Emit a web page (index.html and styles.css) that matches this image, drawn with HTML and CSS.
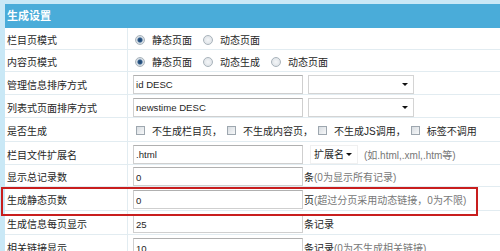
FILE: index.html
```html
<!DOCTYPE html>
<html lang="zh-CN">
<head>
    <meta charset="UTF-8">
    <title>生成设置</title>
    <link rel="stylesheet" href="styles.css">
</head>
<body>
<div class="page">
    <div class="panel">
        <div class="panel-head">生成设置</div>

        <div class="row compact">
            <div class="label">栏目页模式</div>
            <div class="field">
                <label class="opt"><input type="radio" name="listmode" checked>静态页面</label>
                <label class="opt"><input type="radio" name="listmode">动态页面</label>
            </div>
        </div>

        <div class="row compact">
            <div class="label">内容页模式</div>
            <div class="field">
                <label class="opt"><input type="radio" name="showmode" checked>静态页面</label>
                <label class="opt"><input type="radio" name="showmode">动态生成</label>
                <label class="opt"><input type="radio" name="showmode">动态页面</label>
            </div>
        </div>

        <div class="row">
            <div class="label">管理信息排序方式</div>
            <div class="field">
                <input type="text" class="txt" value="id DESC">
                <span class="select"><select></select></span>
            </div>
        </div>

        <div class="row">
            <div class="label">列表式页面排序方式</div>
            <div class="field">
                <input type="text" class="txt" value="newstime DESC">
                <span class="select"><select></select></span>
            </div>
        </div>

        <div class="row tall">
            <div class="label">是否生成</div>
            <div class="field checks">
                <label class="opt"><input type="checkbox">不生成栏目页，</label>
                <label class="opt"><input type="checkbox">不生成内容页，</label>
                <label class="opt"><input type="checkbox">不生成JS调用，</label>
                <label class="opt"><input type="checkbox">标签不调用</label>
            </div>
        </div>

        <div class="row">
            <div class="label">栏目文件扩展名</div>
            <div class="field">
                <input type="text" class="txt" value=".html">
                <span class="select small"><select><option>扩展名</option></select></span>
                <span class="note">(如.html,.xml,.htm等)</span>
            </div>
        </div>

        <div class="row compact">
            <div class="label">显示总记录数</div>
            <div class="field">
                <input type="text" class="txt" value="0">
                <span class="unit">条<span class="note">(0为显示所有记录)</span></span>
            </div>
        </div>

        <div class="row tall marked">
            <div class="label">生成静态页数</div>
            <div class="field">
                <input type="text" class="txt" value="0">
                <span class="unit">页<span class="note">(超过分页采用动态链接，0为不限)</span></span>
            </div>
        </div>

        <div class="row tall">
            <div class="label">生成信息每页显示</div>
            <div class="field">
                <input type="text" class="txt" value="25">
                <span class="unit">条记录</span>
            </div>
        </div>

        <div class="row tall">
            <div class="label">相关链接显示</div>
            <div class="field">
                <input type="text" class="txt" value="10">
                <span class="unit">条记录<span class="note">(0为不生成相关链接)</span></span>
            </div>
        </div>
    </div>
</div>
</body>
</html>
```

FILE: styles.css
```css
body {
    margin: 0;
    font-family: "Liberation Sans", "Noto Sans CJK SC", sans-serif;
    font-size: 10px;
    color: #262626;
    background: #fff;
}

.page {
    height: 251px;
    box-sizing: border-box;
    overflow: hidden;
    padding: 4px 0 0 5px;
    background: #c9e8f6;
}

.panel {
    background: #fff;
}

.panel-head {
    height: 24px;
    line-height: 24px;
    padding-left: 2px;
    background: #4aacd9;
    color: #fff;
    font-size: 11px;
    font-weight: bold;
}

.row {
    position: relative;
    display: grid;
    grid-template-columns: 123px 1fr;
    height: 23px;
    box-sizing: border-box;
    border-bottom: 1px solid #e2ecf1;
}

.row.compact {
    height: 22px;
}

.row.tall {
    height: 24px;
}

.label {
    display: flex;
    align-items: center;
    padding: 2px 0 0 2px;
    border-right: 1px solid #e2ecf1;
}

.field {
    display: flex;
    align-items: center;
    gap: 5px;
    padding: 2px 0 0 5px;
    white-space: nowrap;
}

.opt {
    display: flex;
    align-items: center;
    margin-right: 4px;
}

input[type="radio"] {
    appearance: none;
    width: 10px;
    height: 10px;
    margin: 0 7px 0 2px;
    border: 1px solid #a9b3bb;
    border-radius: 50%;
    box-sizing: border-box;
    background: radial-gradient(circle, #f4f6f8 0, #d9dee3 100%);
}

input[type="radio"]:checked {
    background: radial-gradient(circle, #1e3f66 0, #2d5a8a 2px, #cfd8e0 3px, #eef1f4 100%);
}

.checks {
    gap: 0;
}

.checks .opt {
    margin-right: 2px;
}

input[type="checkbox"] {
    appearance: none;
    width: 9px;
    height: 9px;
    margin: 0 7px 0 3px;
    border: 1px solid #9ea7af;
    box-sizing: border-box;
    background: linear-gradient(135deg, #d8dde2, #f7f8f9);
}

.txt {
    width: 170px;
    height: 19px;
    box-sizing: border-box;
    margin: 0;
    padding: 1px 2px 0;
    border: 1px solid #cfcfcf;
    border-top-color: #b0b0b0;
    font-family: inherit;
    font-size: 9.6px;
    color: #262626;
}

.select {
    position: relative;
    display: inline-block;
}

.select select {
    appearance: none;
    display: block;
    width: 106px;
    height: 19px;
    margin: 0;
    padding: 0 3px;
    border: 1px solid #d4d4d4;
    border-radius: 0;
    background: #fff;
    font-family: inherit;
    font-size: 10px;
    color: #262626;
}

.select::after {
    content: "";
    position: absolute;
    right: 6px;
    top: 8px;
    border-left: 3px solid transparent;
    border-right: 3px solid transparent;
    border-top: 3px solid #111;
}

.select.small {
    margin-left: 2px;
}

.select.small select {
    width: 48px;
    border-color: #f0f0f0;
}

.note {
    color: #777;
}

.field .note {
    margin-left: 1px;
}

.unit {
    margin-left: -4px;
}

.unit .note {
    margin-left: 0;
}

.row.marked::after {
    content: "";
    position: absolute;
    z-index: 2;
    left: -4px;
    top: 0;
    width: 477px;
    height: 29px;
    box-sizing: border-box;
    border: 2px solid #c81e1e;
}
```
